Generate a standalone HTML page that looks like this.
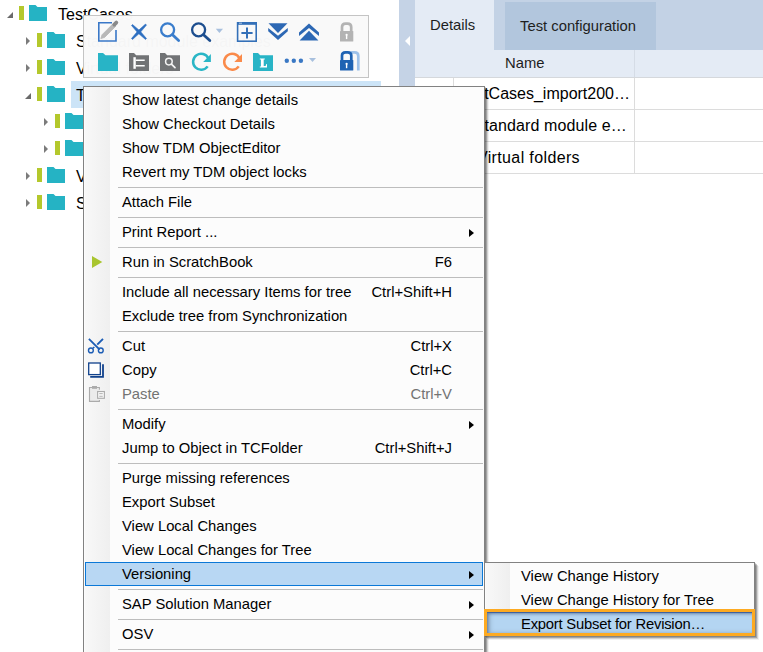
<!DOCTYPE html>
<html><head><meta charset="utf-8">
<style>
*{margin:0;padding:0;box-sizing:border-box}
html,body{width:763px;height:652px;overflow:hidden;background:#fff;font-family:"Liberation Sans",sans-serif;font-size:14.8px;color:#000}
.a{position:absolute;display:block}
.t{position:absolute;white-space:nowrap;line-height:1}
.menu{position:absolute;background:#fcfcfc;border:1px solid #828282;box-shadow:1px 1px 0 rgba(0,0,0,.19),2px 2px 0 rgba(0,0,0,.21),3px 3px 0 rgba(0,0,0,.13),4px 4px 0 rgba(0,0,0,.06)}
.gut{position:absolute;top:0;bottom:0;background:linear-gradient(to right,#f8f8f8,#efefef)}
.sep{position:absolute;height:1px;background:#bdbdbd}
.arr{position:absolute;width:0;height:0;border-top:4px solid transparent;border-bottom:4px solid transparent;border-left:5px solid #000}
</style></head>
<body>
<!-- LEFT TREE -->
<div class="a" style="left:71px;top:81px;width:310px;height:27px;background:#cce4f7"></div>
<div class="a" style="left:7px;top:12px;width:0;height:0;border-left:6px solid transparent;border-bottom:6px solid #6a6a6a"></div>
<div class="a" style="left:19px;top:6px;width:5px;height:14px;background:#b4c82c"></div>
<svg class="a" style="left:29px;top:5px" width="18" height="16" viewBox="0 0 18 16"><path d="M0 0H6.5L8.5 2H18V16H0Z" fill="#25b3c4"/></svg>
<div class="t" style="left:58px;top:7px;font-size:16px">TestCases</div>
<div class="a" style="left:26px;top:37px;width:0;height:0;border-top:4px solid transparent;border-bottom:4px solid transparent;border-left:4px solid #7b7b7b"></div>
<div class="a" style="left:37px;top:33px;width:5px;height:14px;background:#b4c82c"></div>
<svg class="a" style="left:47px;top:32px" width="18" height="16" viewBox="0 0 18 16"><path d="M0 0H6.5L8.5 2H18V16H0Z" fill="#25b3c4"/></svg>
<div class="t" style="left:76px;top:34px;font-size:16px">Standard module examples</div>
<div class="a" style="left:26px;top:64px;width:0;height:0;border-top:4px solid transparent;border-bottom:4px solid transparent;border-left:4px solid #7b7b7b"></div>
<div class="a" style="left:37px;top:60px;width:5px;height:14px;background:#b4c82c"></div>
<svg class="a" style="left:47px;top:59px" width="18" height="16" viewBox="0 0 18 16"><path d="M0 0H6.5L8.5 2H18V16H0Z" fill="#25b3c4"/></svg>
<div class="t" style="left:76px;top:61px;font-size:16px">Virtual folders</div>
<div class="a" style="left:25px;top:93px;width:0;height:0;border-left:6px solid transparent;border-bottom:6px solid #6a6a6a"></div>
<div class="a" style="left:37px;top:87px;width:5px;height:14px;background:#b4c82c"></div>
<svg class="a" style="left:47px;top:86px" width="18" height="16" viewBox="0 0 18 16"><path d="M0 0H6.5L8.5 2H18V16H0Z" fill="#25b3c4"/></svg>
<div class="t" style="left:76px;top:88px;font-size:16px">TestCases_import2000</div>
<div class="a" style="left:44px;top:118px;width:0;height:0;border-top:4px solid transparent;border-bottom:4px solid transparent;border-left:4px solid #7b7b7b"></div>
<div class="a" style="left:55px;top:114px;width:5px;height:14px;background:#b4c82c"></div>
<svg class="a" style="left:65px;top:113px" width="18" height="16" viewBox="0 0 18 16"><path d="M0 0H6.5L8.5 2H18V16H0Z" fill="#25b3c4"/></svg>
<div class="t" style="left:94px;top:115px;font-size:16px">Folder</div>
<div class="a" style="left:44px;top:145px;width:0;height:0;border-top:4px solid transparent;border-bottom:4px solid transparent;border-left:4px solid #7b7b7b"></div>
<div class="a" style="left:55px;top:141px;width:5px;height:14px;background:#b4c82c"></div>
<svg class="a" style="left:65px;top:140px" width="18" height="16" viewBox="0 0 18 16"><path d="M0 0H6.5L8.5 2H18V16H0Z" fill="#25b3c4"/></svg>
<div class="t" style="left:94px;top:142px;font-size:16px">Folder</div>
<div class="a" style="left:26px;top:172px;width:0;height:0;border-top:4px solid transparent;border-bottom:4px solid transparent;border-left:4px solid #7b7b7b"></div>
<div class="a" style="left:37px;top:168px;width:5px;height:14px;background:#b4c82c"></div>
<svg class="a" style="left:47px;top:167px" width="18" height="16" viewBox="0 0 18 16"><path d="M0 0H6.5L8.5 2H18V16H0Z" fill="#25b3c4"/></svg>
<div class="t" style="left:76px;top:169px;font-size:16px">Virtual folders</div>
<div class="a" style="left:26px;top:199px;width:0;height:0;border-top:4px solid transparent;border-bottom:4px solid transparent;border-left:4px solid #7b7b7b"></div>
<div class="a" style="left:37px;top:195px;width:5px;height:14px;background:#b4c82c"></div>
<svg class="a" style="left:47px;top:194px" width="18" height="16" viewBox="0 0 18 16"><path d="M0 0H6.5L8.5 2H18V16H0Z" fill="#25b3c4"/></svg>
<div class="t" style="left:76px;top:196px;font-size:16px">Standard module examples</div>

<!-- RIGHT PANEL -->
<div class="a" style="left:399px;top:0;width:16px;height:652px;background:#c5d3e6"></div>
<div class="a" style="left:405px;top:36px;width:0;height:0;border-top:5px solid transparent;border-bottom:5px solid transparent;border-right:5px solid #fff"></div>
<div class="a" style="left:415px;top:0;width:348px;height:78px;background:#e4ebf5"></div>
<div class="a" style="left:494px;top:0;width:269px;height:50px;background:#c3d2e5"></div>
<div class="a" style="left:505px;top:2px;width:151px;height:48px;background:#b2c6dd"></div>
<div class="t" style="left:430px;top:18px;color:#1e1e1e">Details</div>
<div class="t" style="left:520px;top:19px;color:#1e1e1e">Test configuration</div>
<div class="t" style="left:505px;top:56px;color:#1e1e1e">Name</div>
<div class="a" style="left:415px;top:77px;width:348px;height:1px;background:#d5d8dc"></div>
<div class="a" style="left:634px;top:50px;width:1px;height:27px;background:#d5dce6"></div>
<div class="a" style="left:453px;top:78px;width:1px;height:31px;background:#dcdcdc"></div>
<div class="a" style="left:634px;top:78px;width:1px;height:96px;background:#dcdcdc"></div>
<div class="a" style="left:415px;top:109px;width:348px;height:1px;background:#dcdcdc"></div>
<div class="a" style="left:415px;top:141px;width:348px;height:1px;background:#dcdcdc"></div>
<div class="a" style="left:415px;top:173px;width:348px;height:1px;background:#dcdcdc"></div>
<div class="t" style="right:133px;top:86px;font-size:16px">TestCases_import200…</div>
<div class="t" style="right:136px;top:118px;font-size:16px;letter-spacing:0.12px">Standard module e…</div>
<div class="t" style="right:183px;top:150px;font-size:16px;letter-spacing:0.37px">Virtual folders</div>

<!-- TOOLBAR -->
<div class="a" style="left:83px;top:15px;width:286px;height:63px;background:rgba(249,249,249,0.985);border:1px solid #c4c4c4"></div>
<svg class="a" style="left:83px;top:15px" width="287" height="63" viewBox="83 15 287 63">
<!-- edit -->
<path d="M112 22.8H98.8V41H116V30" fill="none" stroke="#3a78c8" stroke-width="1.6"/>
<path d="M100.8 38.6L102 34.8L113.2 23.6L115.8 26.2L104.6 37.4Z" fill="#b8b8b8" stroke="#b8b8b8" stroke-width="0.8" stroke-linejoin="round"/>
<path d="M114.3 24.6L116.3 22.6" stroke="#8a8a8a" stroke-width="3.8" stroke-linecap="round"/>
<!-- X -->
<path d="M131.5 25.5Q137.5 33.5 145.5 39.5L146.5 38.5Q140.5 30.5 132.5 24.5ZM145.5 24.1Q137.5 30.4 131.5 38.5L132.5 39.5Q140.5 33.2 146.5 25.1Z" fill="#2d6fc1" stroke="#2d6fc1" stroke-width="0.6"/>
<!-- search 1 -->
<circle cx="167.6" cy="29.8" r="6.5" fill="none" stroke="#3a7dcc" stroke-width="2.3"/>
<path d="M172.5 34.7L178.6 40.5" stroke="#3a7dcc" stroke-width="2.8" stroke-linecap="round"/>
<!-- search 2 -->
<circle cx="198.6" cy="29.8" r="6.5" fill="none" stroke="#1d4e8f" stroke-width="2.3"/>
<path d="M203.5 34.7L209.8 40.5" stroke="#1d4e8f" stroke-width="2.8" stroke-linecap="round"/>
<path d="M215.8 28.8H223L219.4 33Z" fill="#a8c0de"/>
<!-- add window -->
<rect x="237.6" y="22.8" width="18.6" height="18.4" fill="none" stroke="#3470b8" stroke-width="1.6"/>
<rect x="237" y="22" width="20" height="2.8" fill="#3470b8"/>
<path d="M239 23.2H242" stroke="#cfe0f3" stroke-width="0.8"/>
<path d="M241.4 33H252.6M247 27.4V38.6" stroke="#3470b8" stroke-width="2"/>
<!-- double chevron down -->
<path d="M268.5 23.2H287.5L278 33Z" fill="#2d68b4"/>
<path d="M268.2 28L278 35.8L287.8 28V31.2L278 40L268.2 31.2Z" fill="#2d68b4"/>
<!-- up chevron -->
<path d="M299.6 40.4H318.4L309 30.8Z" fill="#2d68b4"/>
<path d="M299 35.9L309 28L319 35.9V32.4L309 23.6L299 32.4Z" fill="#2d68b4"/>
<!-- gray lock -->
<path d="M342 31.5V27Q342 23.6 345.6 23.6H347.6Q351.2 23.6 351.2 27V31.5" fill="none" stroke="#b3b3b3" stroke-width="2.7"/>
<rect x="340" y="30.9" width="13.3" height="10.7" rx="0.6" fill="#b3b3b3"/>
<circle cx="346.6" cy="34.8" r="1.1" fill="#fff"/><rect x="345.9" y="34.8" width="1.4" height="4.3" fill="#fff"/>
<!-- row 2 folder teal -->
<path d="M98 53H103L105.5 55.3H118V71H98Z" fill="#28b4c6"/>
<!-- tree folder -->
<path d="M129 53H134L136.2 55.2H149V71H129Z" fill="#717375"/>
<path d="M133.4 57.2H135.8V68.8H133.4Z" fill="#fff"/>
<path d="M135.8 60.3H144.7M135.8 65.8H144.7" stroke="#fff" stroke-width="1.5"/>
<!-- search folder -->
<path d="M160 53H165L167.2 55.2H180V71H160Z" fill="#717375"/>
<circle cx="168.9" cy="61.6" r="3.3" fill="none" stroke="#f4f4f4" stroke-width="1.5"/>
<path d="M171.4 64.1L175 67.7" stroke="#f4f4f4" stroke-width="1.7" stroke-linecap="round"/>
<!-- teal refresh -->
<path d="M208.35 58.42A8 8 0 1 0 207.65 66.39" fill="none" stroke="#2ab6c6" stroke-width="2.5"/>
<path d="M210.9 54V62.1H203.2Z" fill="#2ab6c6"/>
<!-- orange refresh -->
<path d="M239.45 58.42A8 8 0 1 0 238.75 66.39" fill="none" stroke="#fa8a4a" stroke-width="2.5"/>
<path d="M242.0 54V62.1H234.3Z" fill="#fa8a4a"/>
<!-- L folder -->
<path d="M253 53H258L260.2 55.2H273V71H253Z" fill="#28b4c6"/>
<path d="M259.8 58.6H264.8V59.6H263.7V65.9H265.6L266.4 63.9H267V67.4H259.8V66.4H260.9V59.6H259.8Z" fill="#fff"/>
<!-- dots -->
<circle cx="286.8" cy="60.8" r="2.2" fill="#3a78c4"/>
<circle cx="293.8" cy="60.8" r="2.2" fill="#3a78c4"/>
<circle cx="300.9" cy="60.8" r="2.2" fill="#3a78c4"/>
<path d="M309 58H316L312.5 62Z" fill="#a8c0de"/>
<!-- blue lock -->
<path d="M350.5 52.3H354.6Q358.3 52.3 358.3 56V70.5" fill="none" stroke="#9ec2ea" stroke-width="2.7"/>
<path d="M342 60.5V55.6Q342 52.3 345.5 52.3H347.8Q351.3 52.3 351.3 55.6V60.5" fill="none" stroke="#1f63b3" stroke-width="2.7"/>
<rect x="340" y="60" width="13.3" height="10.5" rx="0.6" fill="#1f63b3"/>
<circle cx="346.6" cy="63.8" r="1.1" fill="#fff"/><rect x="345.9" y="63.8" width="1.4" height="4.4" fill="#fff"/>
</svg>


<!-- CONTEXT MENU -->
<div class="menu" style="left:83px;top:86px;width:402px;height:600px">
  <div class="gut" style="left:1px;width:25px"></div>
<div class="t" style="left:38px;top:6px;color:#000">Show latest change details</div>
<div class="t" style="left:38px;top:30px;color:#000">Show Checkout Details</div>
<div class="t" style="left:38px;top:54px;color:#000">Show TDM ObjectEditor</div>
<div class="t" style="left:38px;top:78px;color:#000">Revert my TDM object locks</div>
<div class="sep" style="left:34px;top:100px;width:365px"></div>
<div class="t" style="left:38px;top:108px;color:#000">Attach File</div>
<div class="sep" style="left:34px;top:130px;width:365px"></div>
<div class="t" style="left:38px;top:138px;color:#000">Print Report ...</div>
<div class="arr" style="left:385px;top:142px"></div>
<div class="sep" style="left:34px;top:160px;width:365px"></div>
<div class="t" style="left:38px;top:168px;color:#000">Run in ScratchBook</div>
<div class="t" style="right:32px;top:168px;color:#000">F6</div>
<div class="sep" style="left:34px;top:190px;width:365px"></div>
<div class="t" style="left:38px;top:198px;color:#000">Include all necessary Items for tree</div>
<div class="t" style="right:32px;top:198px;color:#000">Ctrl+Shift+H</div>
<div class="t" style="left:38px;top:222px;color:#000">Exclude tree from Synchronization</div>
<div class="sep" style="left:34px;top:244px;width:365px"></div>
<div class="t" style="left:38px;top:252px;color:#000">Cut</div>
<div class="t" style="right:32px;top:252px;color:#000">Ctrl+X</div>
<div class="t" style="left:38px;top:276px;color:#000">Copy</div>
<div class="t" style="right:32px;top:276px;color:#000">Ctrl+C</div>
<div class="t" style="left:38px;top:300px;color:#737373">Paste</div>
<div class="t" style="right:32px;top:300px;color:#737373">Ctrl+V</div>
<div class="sep" style="left:34px;top:322px;width:365px"></div>
<div class="t" style="left:38px;top:330px;color:#000">Modify</div>
<div class="arr" style="left:385px;top:334px"></div>
<div class="t" style="left:38px;top:354px;color:#000">Jump to Object in TCFolder</div>
<div class="t" style="right:32px;top:354px;color:#000">Ctrl+Shift+J</div>
<div class="sep" style="left:34px;top:376px;width:365px"></div>
<div class="t" style="left:38px;top:384px;color:#000">Purge missing references</div>
<div class="t" style="left:38px;top:408px;color:#000">Export Subset</div>
<div class="t" style="left:38px;top:432px;color:#000">View Local Changes</div>
<div class="t" style="left:38px;top:456px;color:#000">View Local Changes for Tree</div>
<div class="a" style="left:1px;top:475px;width:398px;height:24px;background:#b8d7f3;border:1px solid #0b78d7"></div>
<div class="t" style="left:38px;top:480px;color:#000">Versioning</div>
<div class="arr" style="left:385px;top:484px"></div>
<div class="sep" style="left:34px;top:502px;width:365px"></div>
<div class="t" style="left:38px;top:510px;color:#000">SAP Solution Manager</div>
<div class="arr" style="left:385px;top:514px"></div>
<div class="sep" style="left:34px;top:532px;width:365px"></div>
<div class="t" style="left:38px;top:540px;color:#000">OSV</div>
<div class="arr" style="left:385px;top:544px"></div>
<div class="sep" style="left:34px;top:562px;width:365px"></div>
<div class="t" style="left:38px;top:570px;color:#000">More</div>
</div>

<svg class="a" style="left:84px;top:240px" width="26" height="170" viewBox="84 240 26 170">
<!-- play -->
<path d="M92 256L102.3 262L92 268Z" fill="#a9c52f"/>
<!-- scissors -->
<g fill="none" stroke="#1c5db5">
<path d="M89.6 339.6L99 349" stroke-width="1.9" stroke-linecap="square"/>
<path d="M102.3 339.6L97.9 344" stroke-width="1.9" stroke-linecap="square"/>
<path d="M93 348.3L94.3 347" stroke-width="1.6"/>
<circle cx="90.9" cy="350.4" r="2.4" stroke-width="1.4"/>
<circle cx="100.8" cy="350.4" r="2.4" stroke-width="1.4"/>
</g>
<!-- copy -->
<path d="M103 364.2V376.8H90.2" fill="none" stroke="#10418c" stroke-width="1.8"/>
<rect x="88.7" y="363" width="11.6" height="11.6" fill="#fff" stroke="#10418c" stroke-width="1.3"/>
<!-- paste -->
<path d="M99.4 389.7V387.5H89.5V401.4H99.4V400" fill="#ebebeb" stroke="#ababab" stroke-width="1.1"/>
<rect x="92" y="386" width="5" height="2.8" fill="#ababab"/>
<rect x="97.6" y="391.5" width="6.8" height="6.8" fill="#f6f6f6" stroke="#ababab" stroke-width="1.1"/>
<path d="M99.3 393.6H102.7M99.3 396.3H102.7" stroke="#ababab" stroke-width="0.9"/>
</svg>

<!-- SUBMENU -->
<div class="menu" style="left:484px;top:562px;width:271px;height:74px">
  <div class="gut" style="left:1px;width:24px"></div>
  <div class="t" style="left:36px;top:6px">View Change History</div>
  <div class="t" style="left:36px;top:30px">View Change History for Tree</div>
  <div class="a" style="left:0;top:47px;width:269px;height:24px;background:#b4d5f2"></div>
  <div class="a" style="left:2px;top:49px;width:266px;height:21px;background:#b4d5f2;box-shadow:inset 0 1px 0 #3f62a0,inset 1px 2px 3px rgba(40,60,100,.45),inset 3px 0 4px rgba(70,80,100,.3)"></div>
  <div class="t" style="left:36px;top:54px;letter-spacing:-0.22px">Export Subset for Revision…</div>
</div>
<div class="a" style="left:484px;top:609px;width:271px;height:27px;border:3px solid #fdaa22"></div>
</body></html>
